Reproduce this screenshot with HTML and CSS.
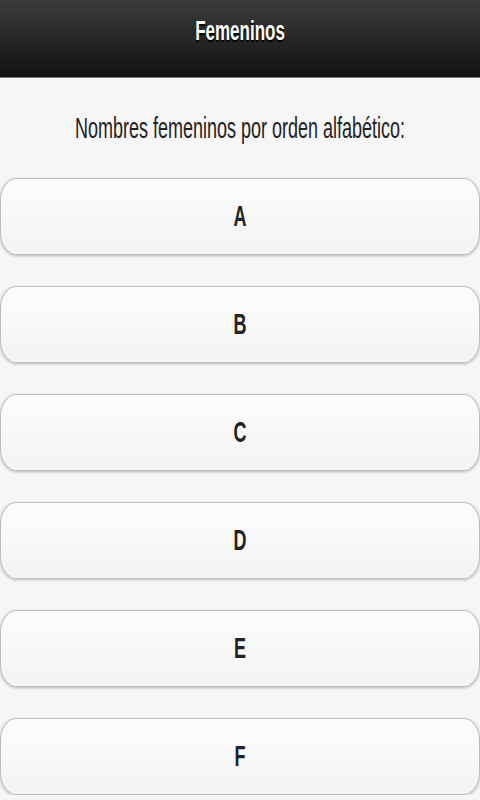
FILE: index.html
```html
<!DOCTYPE html>
<html>
<head>
  <meta charset="utf-8">
  <title>Femeninos</title>
  <link rel="stylesheet" href="styles.css">
</head>
<body>

<div class="header">
  <h1><span class="tall">Femeninos</span></h1>
</div>

<div class="content">
  <p class="intro"><span class="tall">Nombres femeninos por orden alfabético:</span></p>

  <div class="letters">
    <a class="btn" href="#a"><span class="tall">A</span></a>
    <a class="btn" href="#b"><span class="tall">B</span></a>
    <a class="btn" href="#c"><span class="tall">C</span></a>
    <a class="btn" href="#d"><span class="tall">D</span></a>
    <a class="btn" href="#e"><span class="tall">E</span></a>
    <a class="btn" href="#f"><span class="tall">F</span></a>
  </div>
</div>

</body>
</html>
```

FILE: styles.css
```css
body {
  margin: 0;
  background-color: #f6f6f6;
  font-family: "Liberation Sans", Arial, sans-serif;
  color: #222;
  overflow: hidden;
}
.tall {
  display: inline-block;
  transform: scaleY(1.68);
}
.header {
  height: 77px;
  background: linear-gradient(#3c3c3c, #121212);
  border-bottom: 1px solid #7a7a7a;
  display: flex;
  justify-content: center;
}
.header h1 {
  margin: 0;
  padding-top: 22px;
  font-size: 17px;
  font-weight: bold;
  color: #fff;
  text-shadow: 0 1px 1px #000;
  line-height: 20px;
}
.intro {
  margin: 0;
  height: 100px;
  display: flex;
  align-items: center;
  justify-content: center;
  font-size: 18px;
  color: #222;
}
.letters {
  display: flex;
  flex-direction: column;
  gap: 31px;
}
.btn {
  height: 75px;
  display: flex;
  align-items: center;
  justify-content: center;
  border: 1px solid #bdbdbd;
  border-radius: 16px / 22px;
  background: linear-gradient(#fdfdfd, #f3f3f3);
  box-shadow: 0 1px 3px rgba(0,0,0,0.25);
  color: #222;
  text-decoration: none;
  font-size: 18px;
  font-weight: bold;
}
```
